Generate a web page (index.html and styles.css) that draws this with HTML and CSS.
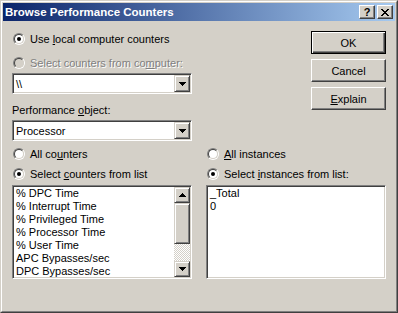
FILE: index.html
```html
<!DOCTYPE html>
<html>
<head>
  <title>Browse Performance Counters</title>
  <meta charset="utf-8">
  <link rel="stylesheet" href="styles.css">
</head>
<body>
  <!-- dialog -->
  <div class="dialog">
    <div class="frame">
      <div class="titlebar">
        <span class="caption">Browse Performance Counters</span>
        <span class="caption-btn help">?</span>
        <span class="caption-btn close">
          <svg width="8" height="7" viewBox="0 0 8 7"><path d="M0 0h2v1H0zM6 0h2v1H6zM1 1h2v1H1zM5 1h2v1H5zM2 2h4v1H2zM3 3h2v1H3zM2 4h4v1H2zM1 5h2v1H1zM5 5h2v1H5zM0 6h2v1H0zM6 6h2v1H6z"/></svg>
        </span>
      </div>

      <div class="client">
        <div class="top">
          <div class="source">
            <label class="opt"><span class="radio checked"></span><span>Use <u>l</u>ocal computer counters</span></label>
            <label class="opt disabled"><span class="radio"></span><span>Select counters from co<u>m</u>puter:</span></label>
            <div class="combo">
              <span class="value">\\</span>
              <span class="raised drop"><svg width="7" height="4"><path d="M0 0h7v1H0zM1 1h5v1H1zM2 2h3v1H2zM3 3h1v1H3z"/></svg></span>
            </div>
            <div class="field-label">Performance <u>o</u>bject:</div>
            <div class="combo">
              <span class="value">Processor</span>
              <span class="raised drop"><svg width="7" height="4"><path d="M0 0h7v1H0zM1 1h5v1H1zM2 2h3v1H2zM3 3h1v1H3z"/></svg></span>
            </div>
          </div>
          <div class="buttons">
            <button class="btn default">OK</button>
            <button class="btn">Cancel</button>
            <button class="btn"><u>E</u>xplain</button>
          </div>
        </div>

        <div class="lists">
          <div class="group">
            <label class="opt"><span class="radio"></span><span>All co<u>u</u>nters</span></label>
            <label class="opt"><span class="radio checked"></span><span>Select <u>c</u>ounters from list</span></label>
            <div class="listbox">
              <ul class="items">
                <li>% DPC Time</li>
                <li>% Interrupt Time</li>
                <li>% Privileged Time</li>
                <li>% Processor Time</li>
                <li>% User Time</li>
                <li>APC Bypasses/sec</li>
                <li>DPC Bypasses/sec</li>
              </ul>
              <div class="scrollbar">
                <span class="raised arrow"><svg width="7" height="4"><path d="M3 0h1v1H3zM2 1h3v1H2zM1 2h5v1H1zM0 3h7v1H0z"/></svg></span>
                <span class="raised thumb"></span>
                <span class="track"></span>
                <span class="raised arrow"><svg width="7" height="4"><path d="M0 0h7v1H0zM1 1h5v1H1zM2 2h3v1H2zM3 3h1v1H3z"/></svg></span>
              </div>
            </div>
          </div>
          <div class="group">
            <label class="opt"><span class="radio"></span><span><u>A</u>ll instances</span></label>
            <label class="opt"><span class="radio checked"></span><span>Select <u>i</u>nstances from list:</span></label>
            <div class="listbox">
              <ul class="items">
                <li>_Total</li>
                <li>0</li>
              </ul>
            </div>
          </div>
        </div>
      </div>
    </div>
  </div>
  <!-- end of dialog -->
</body>
</html>
```

FILE: styles.css
```css
body {
  margin: 0;
  background: #d4d0c8;
  font-family: "Liberation Sans", Arial, sans-serif;
  font-size: 11px;
  color: #000;
}
.dialog {
  width: 398px;
  height: 313px;
  box-sizing: border-box;
  border: 1px solid;
  border-color: #d4d0c8 #404040 #404040 #d4d0c8;
  background: #d4d0c8;
}
.frame {
  height: 100%;
  box-sizing: border-box;
  border: 1px solid;
  border-color: #fff #808080 #808080 #fff;
  padding: 1px;
  display: flex;
  flex-direction: column;
}
.titlebar {
  height: 18px;
  padding: 0 2px;
  display: flex;
  align-items: center;
  background: linear-gradient(to right, #0a246a, #a6caf0);
}
.caption {
  flex: 1;
  color: #fff;
  font-weight: bold;
  font-size: 11.5px;
}
.caption-btn {
  width: 16px;
  height: 14px;
  box-sizing: border-box;
  display: flex;
  align-items: center;
  justify-content: center;
  background: #d4d0c8;
  border: 1px solid;
  border-color: #fff #404040 #404040 #fff;
  box-shadow: inset -1px -1px #808080;
  font-weight: bold;
  font-size: 11px;
  line-height: 1;
}
.help {
  margin-right: 2px;
}
.client {
  flex: 1;
  padding: 10px 9px 0;
}
.top {
  display: flex;
  justify-content: space-between;
}
.source {
  width: 180px;
  display: flex;
  flex-direction: column;
}
.buttons {
  width: 75px;
  display: flex;
  flex-direction: column;
  gap: 5px;
}
.btn {
  width: 75px;
  height: 23px;
  padding: 0;
  font: inherit;
  color: #000;
  background: #d4d0c8;
  border: 1px solid;
  border-color: #fff #404040 #404040 #fff;
  box-shadow: inset -1px -1px #808080;
}
.btn.default {
  border-color: #000;
  box-shadow: inset 1px 1px #fff, inset -1px -1px #404040, inset -2px -2px #808080;
}
.opt {
  height: 16px;
  display: flex;
  align-items: center;
  white-space: nowrap;
}
.opt + .opt {
  margin-top: 8px;
}
.lists .opt + .opt {
  margin-top: 4px;
}
.disabled {
  color: #808080;
  text-shadow: 1px 1px #fff;
}
.radio {
  position: relative;
  flex: none;
  width: 12px;
  height: 12px;
  box-sizing: border-box;
  margin: 0 5px 0 1px;
  border-radius: 50%;
  border: 1px solid;
  border-color: #808080 #fff #fff #808080;
}
.radio::before {
  content: "";
  position: absolute;
  inset: 0;
  border-radius: 50%;
  border: 1px solid;
  border-color: #404040 #d4d0c8 #d4d0c8 #404040;
  background: #fff;
}
.disabled .radio::before {
  background: #d4d0c8;
}
.radio.checked::after {
  content: "";
  position: absolute;
  left: 3px;
  top: 3px;
  width: 4px;
  height: 4px;
  border-radius: 50%;
  background: #000;
}
.combo,
.listbox {
  box-sizing: border-box;
  border: 1px solid;
  border-color: #808080 #fff #fff #808080;
  box-shadow: inset 1px 1px #404040, inset -1px -1px #d4d0c8;
  padding: 1px;
  background: #fff;
}
.combo {
  height: 21px;
  margin-top: 2px;
  display: flex;
  align-items: center;
}
.combo .value {
  flex: 1;
  padding-left: 2px;
}
.raised {
  box-sizing: border-box;
  display: flex;
  align-items: center;
  justify-content: center;
  background: #d4d0c8;
  border: 1px solid;
  border-color: #d4d0c8 #404040 #404040 #d4d0c8;
  box-shadow: inset 1px 1px #fff, inset -1px -1px #808080;
}
.drop {
  width: 16px;
  height: 17px;
}
.field-label {
  margin-top: 8px;
  height: 16px;
  line-height: 16px;
}
.lists {
  margin-top: 5px;
  display: flex;
  gap: 14px;
}
.group {
  width: 180px;
  display: flex;
  flex-direction: column;
}
.listbox {
  height: 94px;
  margin-top: 3px;
  display: flex;
}
.items {
  flex: 1;
  margin: 0;
  padding: 0 0 0 2px;
  list-style: none;
  line-height: 13px;
  overflow: hidden;
  white-space: nowrap;
}
.scrollbar {
  width: 16px;
  display: flex;
  flex-direction: column;
}
.arrow {
  height: 16px;
}
.thumb {
  height: 41px;
}
.track {
  flex: 1;
  background: repeating-conic-gradient(#fff 0 25%, #d4d0c8 0 50%);
  background-size: 2px 2px;
}
svg {
  display: block;
  shape-rendering: crispEdges;
}
```
